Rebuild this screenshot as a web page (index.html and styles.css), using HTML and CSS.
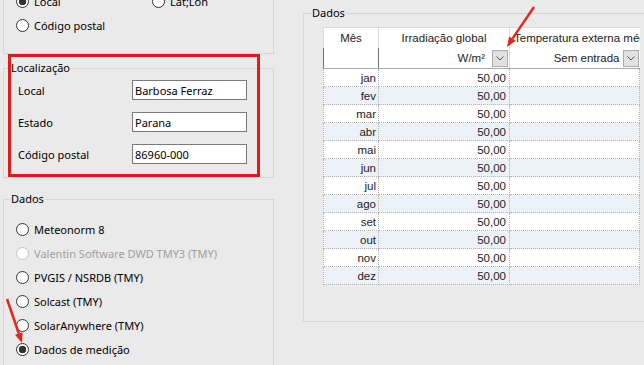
FILE: index.html
```html
<!DOCTYPE html>
<html lang="pt">
<head>
    <meta charset="UTF-8">
    <meta name="viewport" content="width=device-width, initial-scale=1.0">
    <title>Dados climáticos</title>
    <link rel="stylesheet" href="styles.css">
</head>
<body>
    <div class="page">
        <div class="left">
            <div class="top-box">
                <label class="radio"><input type="radio" name="loc" checked> Local</label>
                <label class="radio"><input type="radio" name="loc"> Lat;Lon</label>
                <label class="radio"><input type="radio" name="loc"> Código postal</label>
            </div>

            <fieldset class="group loc-group">
                <legend>Localização</legend>
                <div class="field">
                    <label for="local">Local</label>
                    <input type="text" id="local" value="Barbosa Ferraz">
                </div>
                <div class="field">
                    <label for="estado">Estado</label>
                    <input type="text" id="estado" value="Parana">
                </div>
                <div class="field">
                    <label for="cep">Código postal</label>
                    <input type="text" id="cep" value="86960-000">
                </div>
            </fieldset>

            <fieldset class="group source-group">
                <legend>Dados</legend>
                <label class="radio"><input type="radio" name="src"> Meteonorm 8</label>
                <label class="radio disabled"><input type="radio" name="src" disabled> Valentin Software DWD TMY3 (TMY)</label>
                <label class="radio"><input type="radio" name="src"> PVGIS / NSRDB (TMY)</label>
                <label class="radio"><input type="radio" name="src"> Solcast (TMY)</label>
                <label class="radio"><input type="radio" name="src"> SolarAnywhere (TMY)</label>
                <label class="radio"><input type="radio" name="src" checked> Dados de medição</label>
            </fieldset>
        </div>

        <fieldset class="group data-group">
            <legend>Dados</legend>
            <table class="grid">
                <colgroup>
                    <col class="c-month">
                    <col class="c-irr">
                    <col class="c-temp">
                </colgroup>
                <thead>
                    <tr class="head-title">
                        <th>Mês</th>
                        <th>Irradiação global</th>
                        <th class="clip">Temperatura externa média</th>
                    </tr>
                    <tr class="head-unit">
                        <th></th>
                        <th><div class="unit wide">W/m² <span class="drop"><svg width="8" height="5" viewBox="0 0 8 5"><polyline points="0.5,0.5 4,4 7.5,0.5" fill="none" stroke="#555" stroke-width="1"/></svg></span></div></th>
                        <th><div class="unit">Sem entrada <span class="drop"><svg width="8" height="5" viewBox="0 0 8 5"><polyline points="0.5,0.5 4,4 7.5,0.5" fill="none" stroke="#555" stroke-width="1"/></svg></span></div></th>
                    </tr>
                </thead>
                <tbody id="rows"></tbody>
            </table>
        </fieldset>
    </div>

    <div class="red-frame"></div>
    <svg class="arrows" width="644" height="365" viewBox="0 0 644 365">
        <line x1="534" y1="7" x2="512.5" y2="38.6" stroke="#e5261c" stroke-width="2.5"/>
        <polygon points="507,47 515.8,40.8 509.1,36.4" fill="#e5261c"/>
        <line x1="7" y1="299" x2="18.8" y2="333.5" stroke="#e5261c" stroke-width="2.5"/>
        <polygon points="22,343 22.6,332.2 15,334.8" fill="#e5261c"/>
    </svg>

    <script>
        const months = ["jan", "fev", "mar", "abr", "mai", "jun", "jul", "ago", "set", "out", "nov", "dez"];
        const body = document.getElementById("rows");
        months.forEach(function(m) {
            const tr = document.createElement("tr");
            tr.innerHTML = `<td>${m}</td><td>50,00</td><td></td>`;
            body.appendChild(tr);
        });
    </script>
</body>
</html>
```

FILE: styles.css
```css
body {
    margin: 0;
    background: #eaeaea;
    font-family: "Noto Sans", Arial, sans-serif;
    font-size: 11px;
    color: #000;
    overflow: hidden;
    height: 365px;
    position: relative;
}
.page {
    display: flex;
    align-items: flex-start;
    gap: 29px;
    padding-left: 3px;
}
.left {
    width: 271px;
    flex: none;
    display: flex;
    flex-direction: column;
}
.top-box {
    margin-top: -11px;
    border: 1px solid #d6d6d6;
    border-top: none;
    padding: 0 0 16px 12px;
    display: grid;
    grid-template-columns: 136px 1fr;
    grid-auto-rows: 24px;
}
.radio {
    display: flex;
    align-items: center;
    gap: 5px;
    height: 24px;
}
.radio input {
    appearance: none;
    -webkit-appearance: none;
    margin: 0;
    width: 13px;
    height: 13px;
    border: 1px solid #333;
    border-radius: 50%;
    background: #fff;
}
.radio input:checked {
    background: radial-gradient(circle, #333 0 3.5px, #fff 4px);
}
.radio.disabled {
    color: #a0a0a0;
}
.radio.disabled input {
    border-color: #c4c4c4;
}
.group {
    margin: 0;
    border: 1px solid #d6d6d6;
    min-width: 0;
}
.group legend {
    padding: 0;
    line-height: 16px;
}
.loc-group {
    margin-top: 6px;
    padding: 4px 8px 13px 7px;
}
.field {
    display: flex;
    align-items: center;
    height: 20px;
    padding-left: 7px;
    margin-bottom: 12px;
}
.field:last-child {
    margin-bottom: 0;
}
.field label {
    width: 114px;
}
.field input {
    box-sizing: border-box;
    width: 115px;
    height: 20px;
    margin: 0;
    border: 1px solid #7a7a7a;
    padding: 0 2px;
    font: inherit;
    background: #fff;
}
.source-group {
    margin-top: 13px;
    padding: 10px 8px 20px 12px;
    display: flex;
    flex-direction: column;
}
.source-group legend {
    margin-left: -5px;
}
.data-group {
    flex: none;
    width: 360px;
    margin-top: 5px;
    padding: 6px 8px 36px 19px;
}
.data-group legend {
    margin-left: -11px;
}
.grid {
    border-collapse: collapse;
    table-layout: fixed;
    width: 316px;
    font: 11.5px "Liberation Sans", Arial, sans-serif;
    color: #222;
    background: #fff;
}
.c-month { width: 55px; }
.c-irr { width: 131px; }
.c-temp { width: 130px; }
.grid th {
    font-weight: normal;
    padding: 0 3px;
    white-space: nowrap;
    overflow: hidden;
}
.head-title th {
    height: 20px;
    border-left: 1px solid #dcdcdc;
    border-top: 1px solid #dcdcdc;
}
.head-title th.clip {
    text-align: left;
    padding-left: 4px;
}
.head-unit th {
    height: 20px;
    padding: 0 1px 0 0;
    border-left: 1px solid #707070;
    border-bottom: 1px solid #a8a8a8;
}
.head-unit th:last-child {
    border-left-color: #dcdcdc;
}
.unit {
    display: flex;
    justify-content: flex-end;
    align-items: center;
    gap: 3px;
}
.unit.wide {
    gap: 7px;
}
.drop {
    box-sizing: border-box;
    width: 16px;
    height: 17px;
    background: #e1e1e1;
    border: 1px solid #adadad;
    display: flex;
    align-items: center;
    justify-content: center;
}
.grid td {
    height: 17px;
    padding: 0 2px;
    text-align: right;
    border: 1px dotted #b4b4b4;
}
.grid td:nth-child(2) {
    padding-right: 3px;
}
.grid tbody tr:nth-child(even) td {
    background: #edf2f8;
}
.red-frame {
    position: absolute;
    left: 8px;
    top: 54px;
    width: 246px;
    height: 117px;
    border: 3px solid #e31a1a;
}
.arrows {
    position: absolute;
    left: 0;
    top: 0;
    pointer-events: none;
}
```
